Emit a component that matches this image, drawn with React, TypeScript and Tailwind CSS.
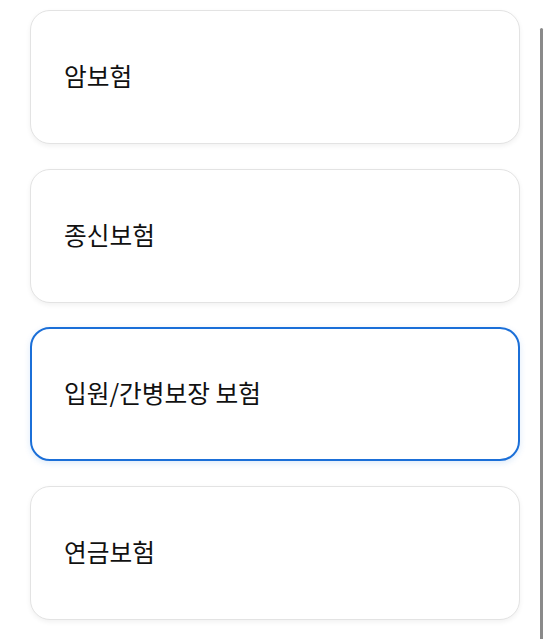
const items = ["암보험", "종신보험", "입원/간병보장 보험", "연금보험"];

export default function App() {
  const selected = 2;

  return (
    <div
      className="relative h-[639px] w-[550px] overflow-hidden bg-white"
      style={{ fontFamily: '"Noto Sans CJK KR", "Noto Sans", sans-serif' }}
    >
      <div className="flex flex-col gap-[24.5px] pl-[30px] pr-[30px] pt-[10px]">
        {items.map((label, i) => (
          <button
            key={label}
            className={`flex h-[134px] w-full items-center rounded-[20px] bg-white pb-[3px] text-left text-[24.7px] leading-none text-[#111] ${
              i === selected
                ? "border-2 border-[#1b6fd8] pl-[32px] shadow-[0_2px_6px_rgba(27,111,216,0.15)]"
                : "border border-[#e3e3e3] pl-[33px] shadow-[0_2px_5px_rgba(0,0,0,0.06)]"
            }`}
          >
            {label}
          </button>
        ))}
      </div>

      {/* scroll indicator */}
      <div className="absolute left-[540px] top-[28px] h-[620px] w-[3px] rounded-full bg-[#8a8a8a]" />
    </div>
  );
}
